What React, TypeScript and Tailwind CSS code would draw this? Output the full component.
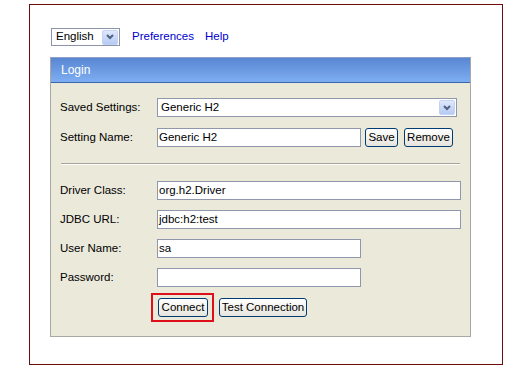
import React from "react";

const font = { fontFamily: '"Liberation Sans", Arial, sans-serif' };

function Arrow() {
  return (
    <div className="w-[16px] h-[15px] rounded-[2px] bg-gradient-to-b from-[#dfe8fb] to-[#b6caf3] border border-[#c3d3f5] flex items-center justify-center">
      <svg width="8" height="6" viewBox="0 0 8 6">
        <path d="M1 1 L4 4 L7 1" stroke="#4d6185" strokeWidth="2" fill="none" />
      </svg>
    </div>
  );
}

function Btn({ children, w }: { children: React.ReactNode; w: string }) {
  return (
    <div
      className={`${w} h-[19px] rounded-[3px] border border-[#003c74] bg-gradient-to-b from-white to-[#e6e4dc] flex items-center justify-center text-[11.5px] text-black`}
    >
      {children}
    </div>
  );
}

function Input({ w, value }: { w: string; value?: string }) {
  return (
    <div className={`${w} h-[19px] border border-[#9097ac] bg-white flex items-center pl-[1px] text-[11.5px] text-black`}>
      {value}
    </div>
  );
}

export default function App() {
  return (
    <div className="w-[531px] h-[370px] bg-white pt-[4px] pl-[29px]" style={font}>
      <div className="w-[474px] h-[361px] border border-[#6a0d0d] pl-[20px] pt-[23px]">
        <div className="flex items-center h-[18px]">
          <div className="ml-[1px] w-[69px] h-[18px] border border-[#8d93a8] bg-white flex items-center justify-between pl-[4px] pr-[1px] text-[11.5px] text-black">
            <span>English</span>
            <Arrow />
          </div>
          <span className="ml-[12px] text-[11.5px] text-[#0000cc]">Preferences</span>
          <span className="ml-[11px] text-[11.5px] text-[#0000cc]">Help</span>
        </div>

        <div className="mt-[11px] w-[421px] border border-[#a9a9a4] border-t-[#8aa0c6]">
          <div className="h-[25px] bg-gradient-to-b from-[#5986d2] to-[#7eaef2] border-b border-[#3d67ad] flex items-center pl-[10px] text-[12px] text-white">
            Login
          </div>
          <div className="bg-[#ebe9da] pl-[9px] pt-[15px] pb-[14px] text-[11.5px] text-black">
            <div className="flex items-center h-[19px]">
              <span className="w-[97px]">Saved Settings:</span>
              <div className="w-[300px] h-[19px] border border-[#9097ac] bg-white flex items-center justify-between pl-[3px] pr-[1px]">
                <span>Generic H2</span>
                <Arrow />
              </div>
            </div>
            <div className="flex items-center h-[19px] mt-[11px]">
              <span className="w-[97px]">Setting Name:</span>
              <Input w="w-[204px]" value="Generic H2" />
              <div className="ml-[4px]">
                <Btn w="w-[33px]">Save</Btn>
              </div>
              <div className="ml-[6px]">
                <Btn w="w-[49px]">Remove</Btn>
              </div>
            </div>
            <div className="mt-[16px] ml-[1px] w-[399px] h-[2px] border-t border-[#a7a59a] border-b border-b-white" />
            <div className="flex items-center h-[19px] mt-[16px]">
              <span className="w-[97px]">Driver Class:</span>
              <Input w="w-[304px]" value="org.h2.Driver" />
            </div>
            <div className="flex items-center h-[19px] mt-[10px]">
              <span className="w-[97px]">JDBC URL:</span>
              <Input w="w-[304px]" value="jdbc:h2:test" />
            </div>
            <div className="flex items-center h-[19px] mt-[10px]">
              <span className="w-[97px]">User Name:</span>
              <Input w="w-[204px]" value="sa" />
            </div>
            <div className="flex items-center h-[19px] mt-[10px]">
              <span className="w-[97px]">Password:</span>
              <Input w="w-[204px]" />
            </div>
            <div className="flex items-center mt-[6px] pl-[91px]">
              <div className="border-2 border-[#e0101a] pl-[5px] pr-[4px] py-[3px]">
                <Btn w="w-[50px]">Connect</Btn>
              </div>
              <div className="ml-[5px]">
                <Btn w="w-[88px]">Test Connection</Btn>
              </div>
            </div>
          </div>
        </div>
      </div>
    </div>
  );
}
